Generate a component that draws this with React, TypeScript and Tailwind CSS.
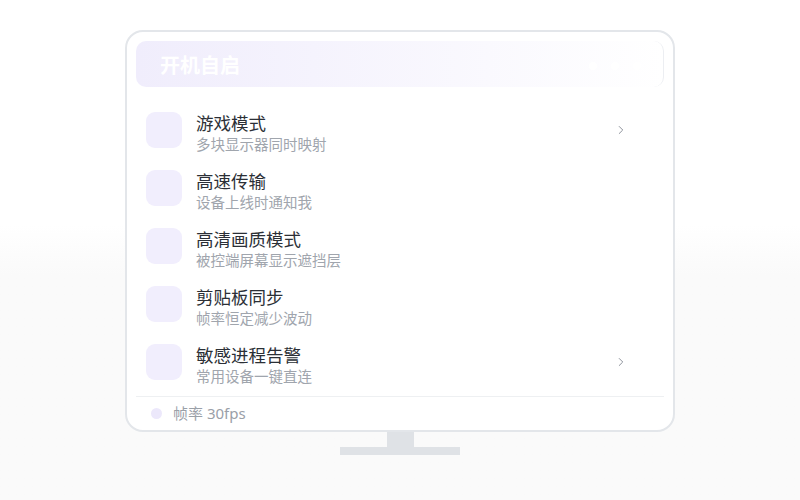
import { ChevronRight } from "lucide-react";

const items = [
  { title: "游戏模式", desc: "多块显示器同时映射", arrow: true },
  { title: "高速传输", desc: "设备上线时通知我", arrow: false },
  { title: "高清画质模式", desc: "被控端屏幕显示遮挡层", arrow: false },
  { title: "剪贴板同步", desc: "帧率恒定减少波动", arrow: false },
  { title: "敏感进程告警", desc: "常用设备一键直连", arrow: true },
];

export default function App() {
  return (
    <div
      className="w-[800px] h-[500px] flex flex-col items-center pt-[30px] bg-gradient-to-b from-white from-45% to-[#fafafa] to-55%"
      style={{ fontFamily: '"Noto Sans", "Noto Sans CJK SC", sans-serif' }}
    >
      {/* screen */}
      <div className="w-[550px] h-[402px] rounded-[18px] border-2 border-[#e3e6ea] bg-white pt-[9px] px-[9px] flex flex-col">
        <div className="h-[46px] rounded-[10px] bg-gradient-to-r from-[#f0edfc] to-white border-r border-[#eceef2] flex items-center justify-between pl-[24px] pr-[22px] pt-[4px]">
          <span className="text-white text-[20px] font-bold leading-none">开机自启</span>
          <div className="flex gap-[14px]">
            <span className="w-[8px] h-[8px] rounded-full bg-white" />
            <span className="w-[8px] h-[8px] rounded-full bg-white" />
            <span className="w-[8px] h-[8px] rounded-full bg-white" />
          </div>
        </div>

        <div className="flex flex-col gap-[22px] pt-[25px] pl-[10px] pr-[36px]">
          {items.map((it) => (
            <div key={it.title} className="flex items-start h-[36px]">
              <div className="w-[36px] h-[36px] rounded-[9px] bg-[#f1eefd] shrink-0" />
              <div className="flex-1 flex flex-col ml-[14px]">
                <span className="text-[17.5px] leading-[22px] text-[#2b2f36]">{it.title}</span>
                <span className="text-[14.5px] leading-[20px] text-[#a0a5ad]">{it.desc}</span>
              </div>
              {it.arrow && (
                <ChevronRight size={14} strokeWidth={1.6} className="text-[#858b94] self-center" />
              )}
            </div>
          ))}
        </div>

        <div className="mt-auto border-t border-[#eef0f2] h-[34px] flex items-center pl-[15px] gap-[11px]">
          <span className="w-[11px] h-[11px] rounded-full bg-[#ece8fb]" />
          <span className="text-[15px] text-[#9aa0a8]">帧率 30fps</span>
        </div>
      </div>

      {/* stand */}
      <div className="w-[27px] h-[15px] bg-[#dfe2e6]" />
      <div className="w-[120px] h-[8px] bg-[#dfe2e6]" />
    </div>
  );
}
